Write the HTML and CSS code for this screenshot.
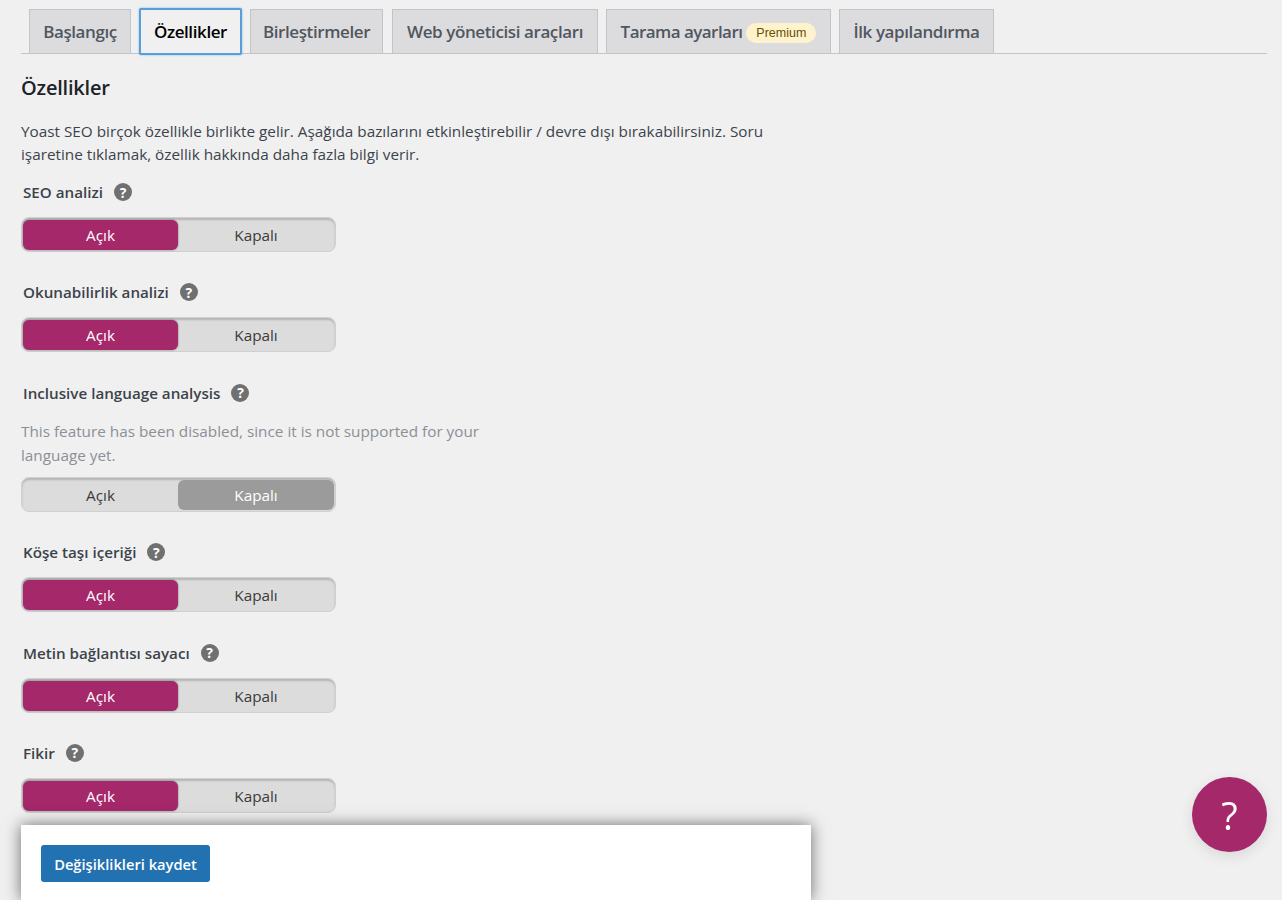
FILE: index.html
```html
<!DOCTYPE html>
<html lang="tr">
<head>
    <meta charset="UTF-8">
    <meta name="viewport" content="width=device-width, initial-scale=1.0">
    <title>Yoast SEO - Özellikler</title>
    <link rel="stylesheet" href="styles.css">
</head>
<body>

<div class="wrap">
    <nav class="tabs">
        <a href="#" class="tab tab-1">Başlangıç</a>
        <a href="#" class="tab tab-2 active">Özellikler</a>
        <a href="#" class="tab tab-3">Birleştirmeler</a>
        <a href="#" class="tab tab-4">Web yöneticisi araçları</a>
        <a href="#" class="tab tab-5">Tarama ayarları <span class="badge">Premium</span></a>
        <a href="#" class="tab tab-6">İlk yapılandırma</a>
    </nav>

    <h2>Özellikler</h2>
    <p class="intro">Yoast SEO birçok özellikle birlikte gelir. Aşağıda bazılarını etkinleştirebilir / devre dışı bırakabilirsiniz. Soru işaretine tıklamak, özellik hakkında daha fazla bilgi verir.</p>

    <div class="feature">
        <div class="label">SEO analizi <span class="help">?</span></div>
        <div class="toggle"><span class="opt on">Açık</span><span class="opt">Kapalı</span></div>
    </div>
    <div class="feature">
        <div class="label">Okunabilirlik analizi <span class="help">?</span></div>
        <div class="toggle"><span class="opt on">Açık</span><span class="opt">Kapalı</span></div>
    </div>
    <div class="feature">
        <div class="label">Inclusive language analysis <span class="help">?</span></div>
        <p class="disabled-note">This feature has been disabled, since it is not supported for your language yet.</p>
        <div class="toggle"><span class="opt">Açık</span><span class="opt off">Kapalı</span></div>
    </div>
    <div class="feature">
        <div class="label">Köşe taşı içeriği <span class="help">?</span></div>
        <div class="toggle"><span class="opt on">Açık</span><span class="opt">Kapalı</span></div>
    </div>
    <div class="feature">
        <div class="label">Metin bağlantısı sayacı <span class="help">?</span></div>
        <div class="toggle"><span class="opt on">Açık</span><span class="opt">Kapalı</span></div>
    </div>
    <div class="feature">
        <div class="label">Fikir <span class="help">?</span></div>
        <div class="toggle"><span class="opt on">Açık</span><span class="opt">Kapalı</span></div>
    </div>
</div>

<div class="save-bar">
    <button class="save">Değişiklikleri kaydet</button>
</div>

<button class="beacon">?</button>

</body>
</html>
```

FILE: styles.css
```css
html, body {
    height: 900px;
    overflow: hidden;
}
body {
    font-family: "Open Sans", "Noto Sans", sans-serif;
    margin: 0;
    padding: 0;
    background-color: #f0f0f1;
    color: #2c3338;
}
.wrap {
    padding: 9px 15px 0 21px;
}
.tabs {
    display: flex;
    gap: 8px;
    padding-left: 8px;
    height: 44px;
    border-bottom: 1px solid #c3c4c7;
}
.tab {
    display: flex;
    align-items: center;
    justify-content: center;
    gap: 4px;
    box-sizing: border-box;
    height: 44px;
    background: #dcdcde;
    border: 1px solid #c3c4c7;
    border-bottom: none;
    color: #50575e;
    font-size: 17px;
    font-weight: 600;
    letter-spacing: -0.4px;
    text-decoration: none;
    white-space: nowrap;
}
.tab-1 { width: 102px; }
.tab-2 { width: 103px; }
.tab-3 { width: 133px; margin-left: 0; }
.tab-4 { width: 206px; margin-left: 1px; }
.tab-5 { width: 225px; letter-spacing: -0.55px; }
.tab-6 { width: 155px; }
.tab.active {
    height: 47px;
    margin-top: -1px;
    background: #f0f0f1;
    color: #000;
    border: 2px solid #5b9dd9;
    border-radius: 2px;
    box-shadow: 0 0 2px rgba(30, 140, 190, .6);
    position: relative;
}
.badge {
    background: #fff3cd;
    color: #674e00;
    font-family: "Liberation Sans", Arial, sans-serif;
    font-size: 12.5px;
    font-weight: 400;
    letter-spacing: 0;
    padding: 2px 10px;
    margin-top: 2px;
    border-radius: 10px;
    line-height: 16px;
}
h2 {
    font-size: 20px;
    font-weight: 600;
    letter-spacing: -0.2px;
    color: #1d2327;
    margin: 20px 0 0;
    line-height: 28px;
}
.intro {
    font-size: 15.3px;
    line-height: 23px;
    width: 760px;
    margin: 17.5px 0 0;
    color: #3c434a;
}
.feature {
    margin-top: 28.4px;
}
.intro + .feature {
    margin-top: 14.5px;
}
.label {
    display: flex;
    align-items: center;
    gap: 11px;
    height: 24px;
    padding-left: 2px;
    font-size: 15.2px;
    font-weight: 600;
    color: #3c434a;
}
.help {
    display: flex;
    align-items: center;
    justify-content: center;
    width: 18px;
    height: 18px;
    border-radius: 50%;
    background: #707070;
    color: #fff;
    font-size: 14px;
    font-weight: 700;
}
.disabled-note {
    width: 490px;
    margin: 14px 0 0;
    font-size: 15.3px;
    line-height: 24px;
    color: #8c8f94;
}
.disabled-note + .toggle {
    margin-top: 10px;
}
.toggle {
    display: flex;
    box-sizing: border-box;
    width: 315px;
    height: 35px;
    margin-top: 13px;
    padding: 2px 1px 1px;
    background: #dcdcdc;
    border: 1px solid #d0d0d0;
    border-radius: 8px;
    box-shadow: inset 0 2px 2px rgba(0, 0, 0, .18);
}
.opt {
    flex: 1;
    display: flex;
    align-items: center;
    justify-content: center;
    border-radius: 6px;
    font-size: 15.3px;
    color: #3a3a3a;
}
.opt:first-child {
    flex: 0 0 155px;
}
.opt.on {
    background: #a4286a;
    color: #fff;
    box-shadow: 0 0 2px rgba(0, 0, 0, .5);
}
.opt.off {
    background: #9b9b9b;
    color: #fff;
}
.save-bar {
    position: fixed;
    left: 21px;
    bottom: 0;
    box-sizing: border-box;
    width: 790px;
    height: 75px;
    padding: 20px;
    background: #fff;
    box-shadow: 0 0 15px rgba(0, 0, 0, .55);
}
.save {
    display: block;
    width: 169px;
    height: 37px;
    padding: 0;
    background: #2271b1;
    color: #fff;
    border: none;
    border-radius: 3px;
    font-family: inherit;
    font-size: 14.7px;
    font-weight: 600;
}
.beacon {
    position: fixed;
    left: 1192px;
    top: 777px;
    width: 75px;
    height: 75px;
    padding: 0;
    border: none;
    border-radius: 50%;
    background: #a4286a;
    color: #fff;
    font-family: "Open Sans", sans-serif;
    font-size: 38px;
    font-weight: 400;
    box-shadow: 0 4px 14px rgba(0, 0, 0, .1);
}
```
